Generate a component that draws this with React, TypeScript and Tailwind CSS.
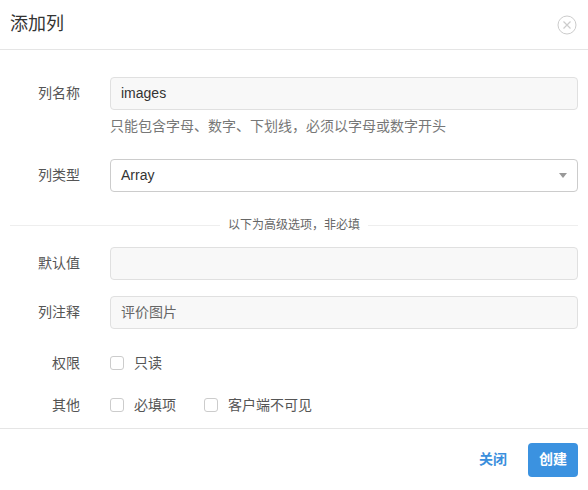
import React from "react";

const F = { fontFamily: '"Liberation Sans","Noto Sans CJK SC",sans-serif' };

function Label({ children }: { children: React.ReactNode }) {
  return <div className="w-[70px] shrink-0 text-right text-[14px] text-[#555]">{children}</div>;
}
function Box() {
  return <span className="w-[14px] h-[14px] border border-[#ccc] rounded-[3px] bg-white inline-block" />;
}

export default function App() {
  return (
    <div style={F} className="w-[588px] h-[490px] bg-white flex flex-col">
      <div className="h-[50px] border-b border-[#e5e5e5] flex items-center justify-between px-[10px] shrink-0">
        <span className="text-[18px] text-[#333]">添加列</span>
        <svg width="20" height="20" viewBox="0 0 20 20" className="mr-[1px]">
          <circle cx="10" cy="10" r="9" fill="none" stroke="#ccc" strokeWidth="1" />
          <path d="M6.5 6.5 L13.5 13.5 M13.5 6.5 L6.5 13.5" stroke="#ccc" strokeWidth="1.2" />
        </svg>
      </div>
      <div className="flex-1 px-[10px] pt-[27px]">
        <div className="flex items-center gap-[30px]">
          <Label>列名称</Label>
          <div className="flex-1 h-[33px] border border-[#e0e0e0] rounded-[4px] bg-[#f8f8f8] px-[10px] flex items-center text-[14px] text-[#333]">images</div>
        </div>
        <div className="ml-[100px] mt-[6px] text-[14px] text-[#777] leading-[20px]">只能包含字母、数字、下划线，必须以字母或数字开头</div>
        <div className="flex items-center gap-[30px] mt-[23px]">
          <Label>列类型</Label>
          <div className="flex-1 h-[33px] border border-[#ccc] rounded-[4px] bg-white px-[10px] flex items-center justify-between text-[14px] text-[#333]">
            <span>Array</span>
            <svg width="8" height="5" viewBox="0 0 8 5"><path d="M0 0 L8 0 L4 5 Z" fill="#999" /></svg>
          </div>
        </div>
        <div className="flex items-center mt-[24px] gap-[8px]">
          <div className="flex-1 border-t border-[#eee]" />
          <span className="text-[12px] text-[#666]">以下为高级选项，非必填</span>
          <div className="flex-1 border-t border-[#eee]" />
        </div>
        <div className="flex items-center gap-[30px] mt-[13px]">
          <Label>默认值</Label>
          <div className="flex-1 h-[33px] border border-[#e0e0e0] rounded-[4px] bg-[#f8f8f8]" />
        </div>
        <div className="flex items-center gap-[30px] mt-[16px]">
          <Label>列注释</Label>
          <div className="flex-1 h-[33px] border border-[#e0e0e0] rounded-[4px] bg-[#f8f8f8] px-[10px] flex items-center text-[14px] text-[#666]">评价图片</div>
        </div>
        <div className="flex items-center gap-[30px] mt-[24px] h-[20px]">
          <Label>权限</Label>
          <label className="flex items-center gap-[10px] text-[14px] text-[#555]"><Box />只读</label>
        </div>
        <div className="flex items-center gap-[30px] mt-[22px] h-[20px]">
          <Label>其他</Label>
          <label className="flex items-center gap-[10px] text-[14px] text-[#555]"><Box />必填项</label>
          <label className="flex items-center gap-[10px] text-[14px] text-[#555] -ml-[2px]"><Box />客户端不可见</label>
        </div>
      </div>
      <div className="h-[62px] border-t border-[#e5e5e5] flex items-center justify-end gap-[21px] px-[10px] shrink-0">
        <span className="text-[14px] text-[#3b8fdd] font-bold">关闭</span>
        <button className="w-[50px] h-[34px] rounded-[4px] bg-[#3b92e0] text-white text-[14px] font-bold">创建</button>
      </div>
    </div>
  );
}
